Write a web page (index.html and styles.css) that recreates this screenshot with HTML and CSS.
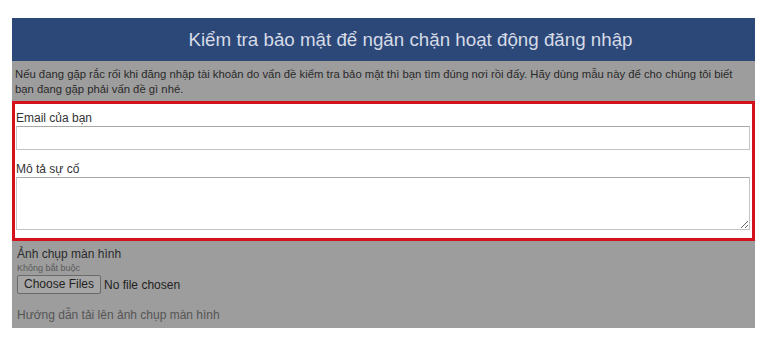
FILE: index.html
```html
<!DOCTYPE html>
<html lang="vi">
<head>
<meta charset="utf-8">
<title>Kiểm tra bảo mật</title>
<link rel="stylesheet" href="styles.css">
</head>
<body>
<div class="panel">
  <div class="header">Kiểm tra bảo mật để ngăn chặn hoạt động đăng nhập</div>
  <div class="content">
    <p class="intro">Nếu đang gặp rắc rối khi đăng nhập tài khoản do vấn đề kiểm tra bảo mật thì bạn tìm đúng nơi rồi đấy. Hãy dùng mẫu này để cho chúng tôi biết bạn đang gặp phải vấn đề gì nhé.</p>
    <div class="highlight">
      <label class="field-label" for="email">Email của bạn</label>
      <input class="text-input" id="email" type="text">
      <label class="field-label second" for="desc">Mô tả sự cố</label>
      <textarea class="text-area" id="desc"></textarea>
    </div>
    <div class="upload">
      <div class="upload-title">Ảnh chụp màn hình</div>
      <div class="upload-hint">Không bắt buộc</div>
      <div class="file-row">
        <span class="file-btn">Choose Files</span>
        <span class="file-status">No file chosen</span>
      </div>
      <div class="guide">Hướng dẫn tải lên ảnh chụp màn hình</div>
    </div>
  </div>
</div>
</body>
</html>
```
FILE: styles.css
```css
html, body {
  margin: 0;
  padding: 0;
  background: #ffffff;
}
body {
  font-family: "Liberation Sans", Arial, sans-serif;
}
.panel {
  width: 743px;
  margin: 18px 0 0 12px;
}
.header {
  height: 43px;
  background: #2c4879;
  color: #d6dbe6;
  font-size: 18.75px;
  line-height: 43px;
  text-align: center;
  padding-left: 54px;
  box-sizing: border-box;
}
.content {
  background: #9d9d9d;
  padding-bottom: 5px;
}
.intro {
  margin: 0;
  padding: 6px 10px 4px 3px;
  font-size: 11.3px;
  line-height: 15px;
  color: #2a2a2a;
}
.highlight {
  border: 3px solid #d3121b;
  background: #ffffff;
  padding: 7px 2px 8px 1px;
  display: flex;
  flex-direction: column;
}
.field-label {
  font-size: 12px;
  line-height: 14px;
  color: #333333;
  margin-bottom: 1px;
}
.field-label.second {
  margin-top: 12px;
}
.text-input {
  height: 24px;
  box-sizing: border-box;
  margin: 0;
  border: 1px solid #c4c4c4;
  border-top-color: #a9a9a9;
  background: #fff;
}
.text-area {
  height: 53px;
  box-sizing: border-box;
  margin: 0;
  border: 1px solid #c4c4c4;
  border-top-color: #a9a9a9;
  background: #fff;
  resize: vertical;
}
.upload {
  padding: 5px 5px 0 5px;
  color: #2a2a2a;
}
.upload-title {
  font-size: 12px;
  line-height: 16px;
}
.upload-hint {
  font-size: 9px;
  line-height: 12px;
  color: #5a5a5a;
}
.file-row {
  display: flex;
  align-items: center;
  gap: 3px;
  margin-top: 1px;
}
.file-btn {
  font-size: 12px;
  line-height: 17px;
  padding: 0 6px;
  border: 1px solid #6a6a6a;
  border-radius: 2px;
  background: #a6a6a6;
  color: #222;
}
.file-status {
  font-size: 12px;
  color: #222;
}
.guide {
  margin-top: 13px;
  font-size: 12px;
  line-height: 16px;
  color: #555;
}
```
